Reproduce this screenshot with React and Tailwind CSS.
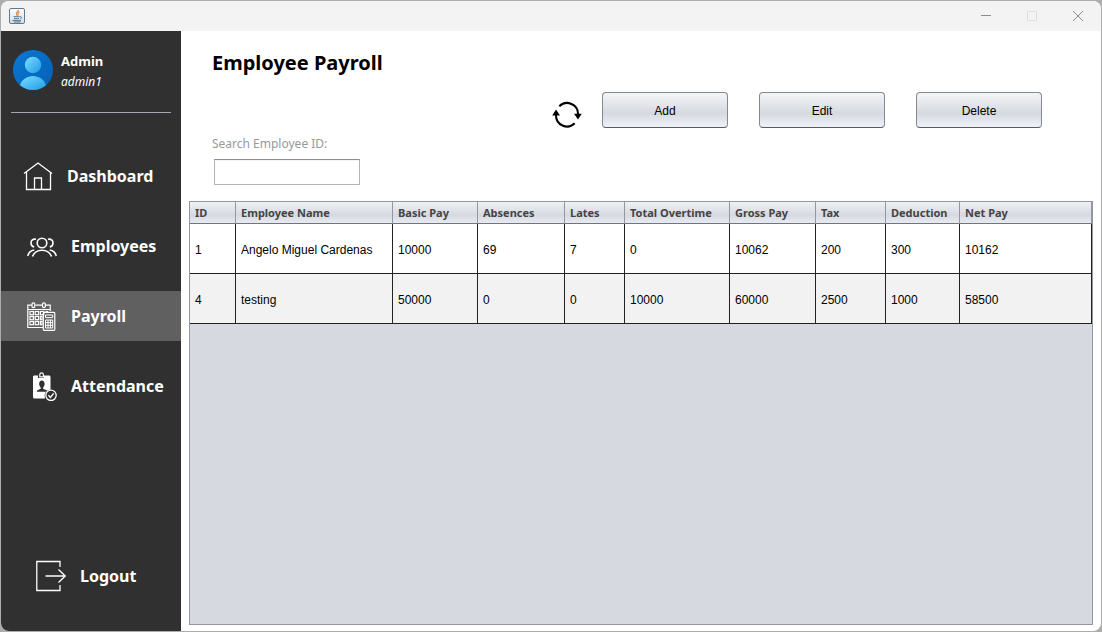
import React from "react";

const line = { fill: "none", stroke: "#fff", strokeWidth: 1.3 };

function HomeIcon() {
  return (
    <svg width="30" height="30" viewBox="0 0 30 30" aria-hidden="true" {...line}>
      <path d="M1 12.500 15 2l14 10.500M3.500 11v17.500h24V11" />
      <path d="M11.500 28.500V17h7v11.500" />
    </svg>
  );
}

function PeopleIcon() {
  return (
    <svg width="30" height="30" viewBox="0 0 30 30" aria-hidden="true" {...line} strokeWidth="1.600">
      <circle cx="15" cy="12" r="4.800" />
      <path d="M5.500 25.500c1.500-4 5-6.300 9.500-6.300s8 2.300 9.500 6.300" />
      <path d="M9 8.300c-3-.8-5 1.200-5 3.700 0 2 1.200 3.600 3.200 4M21 8.300c3-.8 5 1.200 5 3.700 0 2-1.200 3.600-3.200 4" />
      <path d="M.8 25c.7-3.400 3-5.500 6.500-6M29.200 25c-.7-3.400-3-5.500-6.500-6" />
    </svg>
  );
}

function PayrollIcon() {
  return (
    <svg width="30" height="30" viewBox="0 0 30 30" aria-hidden="true" {...line} strokeWidth="1.200">
      <path d="M16 26.500H.8V4.200h4M8.500 4.200h6.500M18.700 4.200h4.500V10M.8 8.500h22.400" />
      <rect x="5" y="1.800" width="2.800" height="4.800" rx="1.300" />
      <rect x="15.500" y="1.800" width="2.800" height="4.800" rx="1.300" />
      {[10.5, 15.5, 20.5].map((y) =>
        [3, 8.2, 13.4].map((x) => (
          <rect key={`${x}-${y}`} x={x} y={y} width={x > 13 && y > 11 ? 1.6 : 3.4} height="3.200" />
        ))
      )}
      <path d="M18.500 10.500h2.600" />
      <rect x="16.300" y="11.300" width="11.500" height="18" rx="1" />
      <path d="M18.500 14h7.200v2.600h-7.200zM18.500 19h7.200v8h-7.200zM18.500 21.600h7.200M18.500 24.300h7.200M21 19v8M23.400 19v8" strokeWidth="1" />
    </svg>
  );
}

function AttendanceIcon() {
  return (
    <svg width="30" height="30" viewBox="0 0 30 30" aria-hidden="true">
      <path
        fill="#fff"
        d="M7.500 4.500h3.500V7h6V4.500h5c.8 0 1.500.6 1.500 1.500v12.500a6.500 6.500 0 0 0-5.500 9H7.500c-.9 0-1.500-.7-1.500-1.500V6c0-.9.600-1.500 1.500-1.500z"
      />
      <path fill="none" stroke="#fff" strokeWidth="1.200" d="M12.800 5.800V3.700a1.800 1.800 0 0 1 3.600 0v2.100z" />
      <path
        fill="#303030"
        d="M14.800 9.500c1.800 0 2.800 1.300 2.800 3.200 0 1.700-.7 3-1.500 3.700v1.300l3.400 1.500c.5.300.7.800.7 1.600H9.800c0-.8.200-1.300.7-1.600l3.200-1.500v-1.300c-.9-.7-1.500-2-1.500-3.700 0-1.900.9-3.200 2.600-3.200z"
      />
      <circle cx="24" cy="24.300" r="5.200" fill="#303030" stroke="#fff" strokeWidth="1.300" />
      <path d="m21.400 24.300 2 2.100 3.300-4" {...line} strokeWidth="1.400" />
    </svg>
  );
}

function LogoutIcon() {
  return (
    <svg width="30" height="32" viewBox="0 0 30 32" aria-hidden="true" {...line}>
      <path d="M24 7V1.500H.8v29H24V25" />
      <path d="M9.500 16H29M22.500 9.500 29.200 16l-6.700 6.500" />
    </svg>
  );
}

function AvatarIcon() {
  return (
    <svg width="40" height="40" viewBox="0 0 40 40" aria-hidden="true">
      <defs>
        <linearGradient id="disc" x1="0" y1="0" x2="1" y2="1">
          <stop offset="0" stopColor="#0a78d4" />
          <stop offset="1" stopColor="#0560b4" />
        </linearGradient>
        <linearGradient id="body" x1="0" y1="0" x2="1" y2="1">
          <stop offset="0" stopColor="#7fdcff" />
          <stop offset="1" stopColor="#1c9be6" />
        </linearGradient>
      </defs>
      <circle cx="20" cy="20" r="20" fill="url(#disc)" />
      <circle cx="20" cy="15" r="8.200" fill="url(#body)" />
      <path d="M7 35.200C9 29.500 14 26 20 26s11 3.500 13 9.200A20 20 0 0 1 7 35.200z" fill="url(#body)" />
    </svg>
  );
}

function JavaIcon() {
  return (
    <svg width="16" height="16" viewBox="0 0 16 16" aria-hidden="true">
      <defs>
        <linearGradient id="tile" x1="0" y1="0" x2="0" y2="1">
          <stop offset="0" stopColor="#fff" />
          <stop offset="1" stopColor="#d3dde6" />
        </linearGradient>
      </defs>
      <rect x=".5" y=".5" width="15" height="15" rx="1.500" fill="url(#tile)" stroke="#5c7a94" />
      <path d="M9.300 1.800c.6 1.800-2.900 2.400-1.900 4.200.3.600.8.900.7 1.700M10.600 3.800C8.800 4.600 8.700 5.500 9.100 6.300c.3.600 0 1.100-.3 1.400" fill="none" stroke="#e8812a" strokeWidth="1.100" />
      <path d="M4.500 8.700h6.300M5 10.700h5M11 8.800c2.300-.3 1.900 1.700 0 2.100M3.500 12.600h8.500M5 14h6.500" fill="none" stroke="#4a7896" strokeWidth="1" />
    </svg>
  );
}

function RefreshIcon() {
  return (
    <svg width="30" height="28" viewBox="0 -1 30 28" aria-hidden="true">
      <g fill="none" stroke="#000" strokeWidth="2">
        <path d="M7.300 5.200A11 11 0 0 1 26 13.500" />
        <path d="M22.700 22.300A11 11 0 0 1 4 14" />
      </g>
      <path d="M22 12.800h7.800L26 18.500zM.2 14.500H8L4 8.500z" />
    </svg>
  );
}

const navItems = [
  { label: "Dashboard", Icon: HomeIcon, pad: "pl-[22px]" },
  { label: "Employees", Icon: PeopleIcon, pad: "pl-[26px]" },
  { label: "Payroll", Icon: PayrollIcon, pad: "pl-[26px]", active: true },
  { label: "Attendance", Icon: AttendanceIcon, pad: "pl-[26px]" },
];

const columns = [
  { label: "ID", width: "w-[46px]" },
  { label: "Employee Name", width: "w-[157px]" },
  { label: "Basic Pay", width: "w-[85px]" },
  { label: "Absences", width: "w-[87px]" },
  { label: "Lates", width: "w-[60px]" },
  { label: "Total Overtime", width: "w-[105px]" },
  { label: "Gross Pay", width: "w-[86px]" },
  { label: "Tax", width: "w-[70px]" },
  { label: "Deduction", width: "w-[74px]" },
  { label: "Net Pay", width: "" },
];

const rows = [
  ["1", "Angelo Miguel Cardenas", "10000", "69", "7", "0", "10062", "200", "300", "10162"],
  ["4", "testing", "50000", "0", "0", "10000", "60000", "2500", "1000", "58500"],
];

function NavButton({ label, Icon, pad, active }) {
  return (
    <button
      type="button"
      aria-current={active ? "page" : undefined}
      className={`flex h-[50px] w-full items-center gap-3.5 text-left text-base leading-6 font-bold text-white ${pad} ${active ? "bg-[#606060]" : ""}`}
    >
      <Icon />
      {label}
    </button>
  );
}

function ActionButton({ children }) {
  return (
    <button
      type="button"
      className="h-9 w-[126px] rounded border border-[#85888f] border-b-[#555a64] bg-linear-to-b from-[#f4f5f8] via-[#d6d9e0] via-60% to-[#eff2f8] pt-0.5 font-['Liberation_Sans',sans-serif] text-xs text-black"
    >
      {children}
    </button>
  );
}

export default function App() {
  return (
    <div className="flex min-h-screen flex-col bg-[#adadad] p-px font-['Noto_Sans',sans-serif]">
      <div className="flex flex-1 flex-col overflow-hidden rounded-lg bg-white">
        <header className="flex h-[30px] items-center justify-between bg-[#f3f3f3] pl-2">
          <JavaIcon />
          <div className="flex text-[#8c8c8c]">
            <button type="button" aria-label="Minimize" className="flex h-[30px] w-[46px] items-center justify-center">
              <svg width="10" height="10" viewBox="0 0 10 10" stroke="currentColor"><path d="M0 4.500h10" /></svg>
            </button>
            <button type="button" aria-label="Maximize" disabled className="flex h-[30px] w-[46px] items-center justify-center text-[#dedede]">
              <svg width="10" height="10" viewBox="0 0 10 10" fill="none" stroke="currentColor"><rect x=".5" y=".5" width="9" height="9" rx=".5" /></svg>
            </button>
            <button type="button" aria-label="Close" className="flex h-[30px] w-[46px] items-center justify-center">
              <svg width="12" height="12" viewBox="0 0 12 12" stroke="currentColor"><path d="m1 1 10 10M11 1 1 11" /></svg>
            </button>
          </div>
        </header>

        <div className="flex flex-1">
          <aside className="flex w-[180px] shrink-0 flex-col bg-[#303030] pb-[30px] text-white">
            <div className="mx-[10px] flex h-[82px] items-start gap-2 border-b border-[#a4a9b2] pt-[19px] pl-0.5">
              <AvatarIcon />
              <div className="flex flex-col gap-px pt-px">
                <p className="text-[13px] leading-5 font-bold">Admin</p>
                <p className="text-xs leading-5 italic">admin1</p>
              </div>
            </div>
            <nav className="mt-[38px] flex flex-col gap-5">
              {navItems.map((item) => (
                <NavButton key={item.label} {...item} />
              ))}
            </nav>
            <div className="mt-auto">
              <NavButton label="Logout" Icon={LogoutIcon} pad="pl-[35px]" />
            </div>
          </aside>

          <main className="flex min-w-0 flex-1 flex-col px-2 pt-[18px] pb-1.5">
            <h1 className="ml-[23px] text-xl leading-7 font-bold text-black">Employee Payroll</h1>
            <div className="mt-[15px] mr-[51px] flex items-end justify-end gap-[31px]">
              <div className="flex items-end gap-5">
                <button type="button" aria-label="Refresh"><RefreshIcon /></button>
                <ActionButton>Add</ActionButton>
              </div>
              <ActionButton>Edit</ActionButton>
              <ActionButton>Delete</ActionButton>
            </div>
            <div className="mt-2 ml-[23px] flex flex-col items-start gap-[7px]">
              <label htmlFor="employee-search" className="text-xs leading-4 text-[#999]">
                Search Employee ID:
              </label>
              <input
                id="employee-search"
                type="text"
                className="ml-0.5 h-[26px] w-[146px] border border-[#b3b3b3] border-t-[#8d8d8d] px-1.5 text-xs inset-shadow-xs outline-none"
              />
            </div>

            <div className="mt-4 flex-1 border border-[#9297a1] bg-[#d6d9e0]">
              <table className="w-full table-fixed border-separate border-spacing-0 text-left text-xs text-black">
                <thead>
                  <tr className="h-[22px] bg-linear-to-b from-[#f0f1f4] via-[#d6d9e0] via-60% to-[#eaedf4]">
                    {columns.map(({ label, width }) => (
                      <th
                        key={label}
                        scope="col"
                        className={`h-[22px] border-r border-b border-r-[#9297a1] border-b-[#70747e] p-0 pl-[5px] text-[11px] leading-5 font-bold whitespace-nowrap text-[#444] ${width}`}
                      >
                        {label}
                      </th>
                    ))}
                  </tr>
                </thead>
                <tbody className="font-['Liberation_Sans',sans-serif]">
                  {rows.map((row) => (
                    <tr key={row[0]} className="bg-white even:bg-[#f2f2f2]">
                      {row.map((cell, i) => (
                        <td key={i} className="h-[50px] border-r border-b border-[#222] p-0 pt-0.5 pl-[5px] whitespace-nowrap">
                          {cell}
                        </td>
                      ))}
                    </tr>
                  ))}
                </tbody>
              </table>
            </div>
          </main>
        </div>
      </div>
    </div>
  );
}
